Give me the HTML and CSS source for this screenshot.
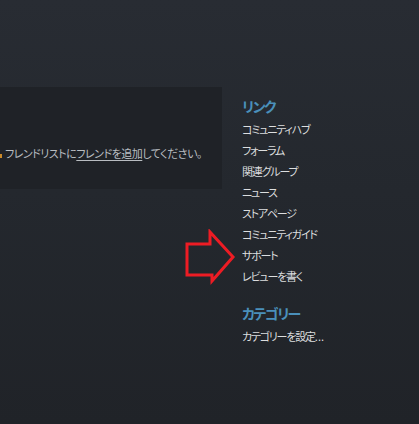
FILE: index.html
```html
<!DOCTYPE html>
<html lang="ja">
<head>
  <meta charset="UTF-8" />
  <meta name="viewport" content="width=device-width, initial-scale=1.0"/>
  <title>リンク</title>
  <link rel="stylesheet" href="styles.css">
</head>
<body>
  <div class="page">
    <div class="friends-panel">
      <p class="friends-note"><span class="note-icon"></span>フレンドリストに<a href="#">フレンドを追加</a>してください。</p>
    </div>
    <aside class="sidebar">
      <h2 class="side-title">リンク</h2>
      <ul class="side-links">
        <li><a href="#">コミュニティハブ</a></li>
        <li><a href="#">フォーラム</a></li>
        <li><a href="#">関連グループ</a></li>
        <li><a href="#">ニュース</a></li>
        <li><a href="#">ストアページ</a></li>
        <li><a href="#">コミュニティガイド</a></li>
        <li><a href="#">サポート</a></li>
        <li><a href="#">レビューを書く</a></li>
      </ul>
      <h2 class="side-title category">カテゴリー</h2>
      <ul class="side-links">
        <li><a href="#">カテゴリーを設定<span class="dots">...</span></a></li>
      </ul>
    </aside>
  </div>
  <svg class="arrow" width="54" height="58" viewBox="0 0 54 58">
    <path d="M3 15 H26 V3 L49 28 L28 52 V46 H3 Z" fill="none" stroke="#ed1c24" stroke-width="3"/>
  </svg>
</body>
</html>
```

FILE: styles.css
```css
body {
  margin: 0;
  min-height: 424px;
  background: linear-gradient(180deg, #282c33 0%, #24282e 45%, #202328 100%);
  font-family: "Noto Sans CJK JP", "Noto Sans", sans-serif;
  font-feature-settings: "palt";
  font-size: 11px;
  color: #dcdedf;
}

.page {
  display: flex;
  align-items: flex-start;
  padding-top: 87px;
}

.friends-panel {
  width: 222px;
  height: 102px;
  box-sizing: border-box;
  padding-top: 58px;
  background: #1f2227;
  flex-shrink: 0;
}

.friends-note {
  margin: 0;
  line-height: 16px;
  white-space: nowrap;
  color: #b9bdc1;
  letter-spacing: -0.5px;
}

.friends-note a {
  color: #b9bdc1;
  text-decoration: underline;
  text-underline-offset: 2px;
}

.note-icon {
  display: inline-block;
  width: 2px;
  height: 4px;
  margin-right: 3px;
  background: #c98a2a;
}

.sidebar {
  margin-left: 20px;
  padding-top: 9px;
}

.side-title {
  margin: 0 0 3px;
  font-size: 14px;
  line-height: 20px;
  font-weight: bold;
  letter-spacing: -1.5px;
  color: #4a90bb;
}

.side-title.category {
  margin-top: 16px;
}

.side-links {
  list-style: none;
  margin: 0;
  padding: 0;
}

.side-links li {
  line-height: 21px;
  letter-spacing: -1.2px;
}

.side-links a {
  color: #dcdedf;
  text-decoration: none;
}

.dots {
  letter-spacing: 0;
}

.arrow {
  position: absolute;
  left: 184px;
  top: 229px;
}
```
